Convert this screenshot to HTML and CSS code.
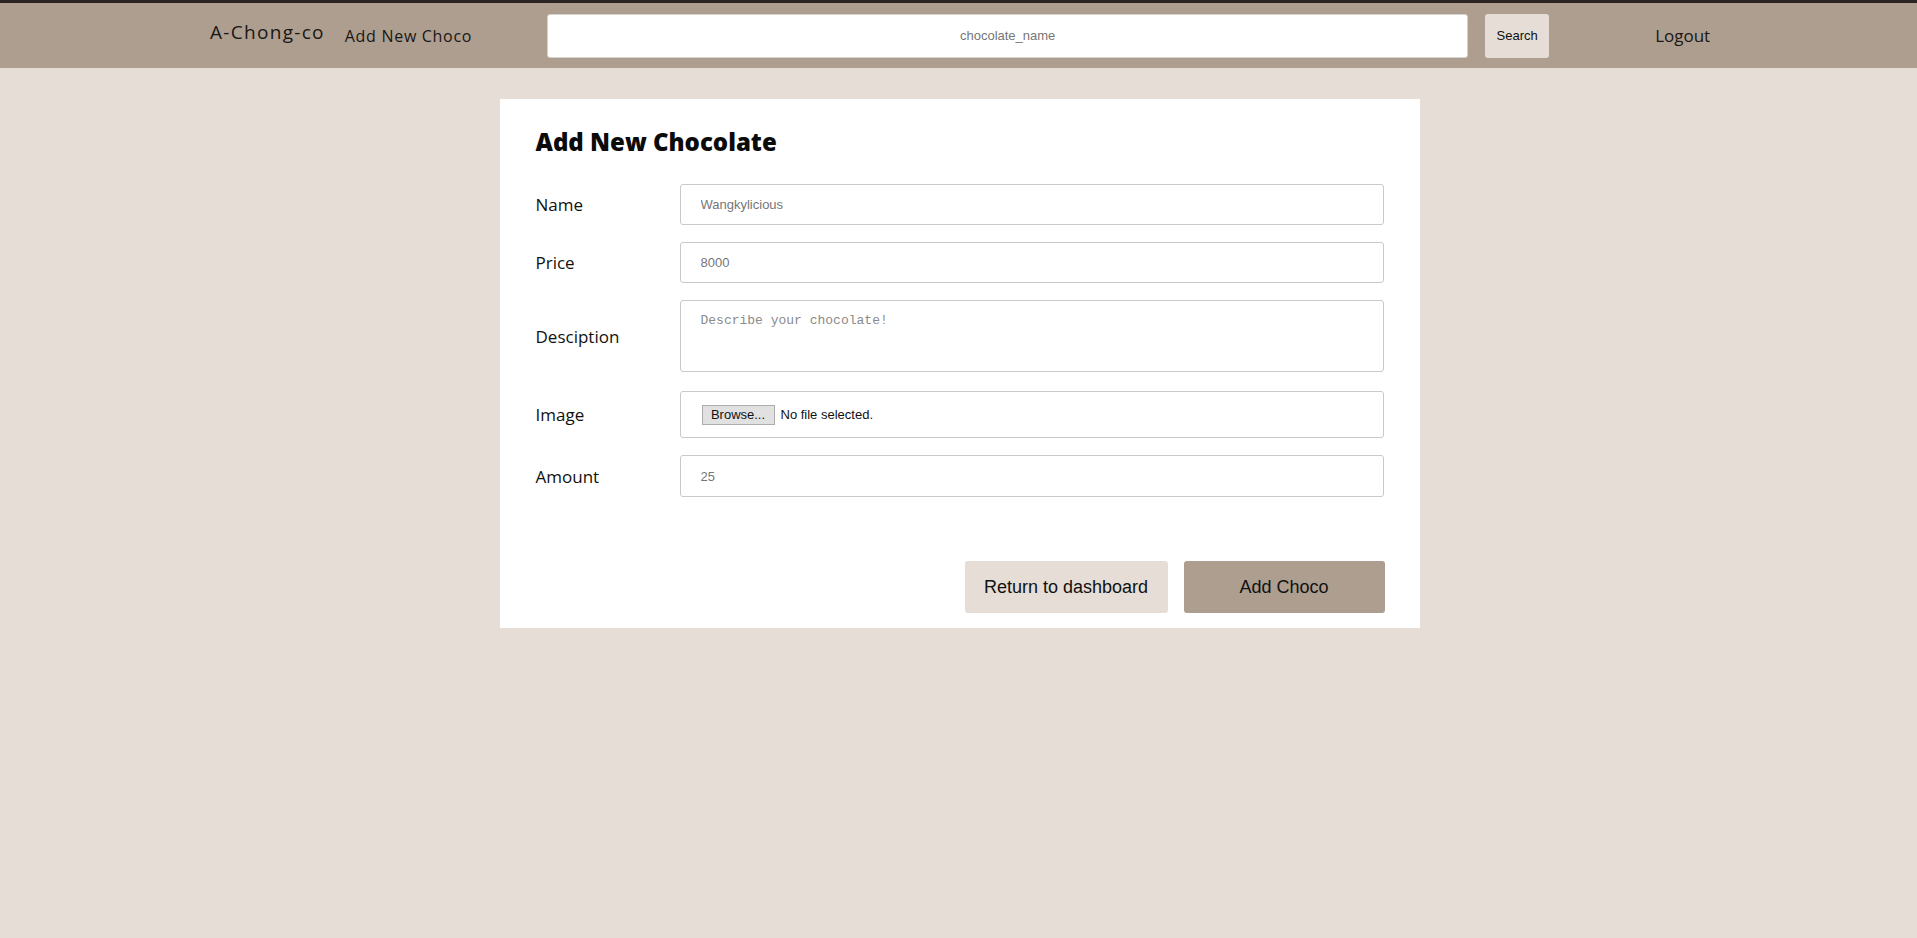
FILE: index.html
```html
<!DOCTYPE html>
<html lang="en">
<head>
<meta charset="utf-8">
<title>Add New Chocolate</title>
<link rel="stylesheet" href="styles.css">
</head>
<body>
<header class="topbar">
  <a class="brand" href="#">A-Chong-co</a>
  <a class="nav-link" href="#">Add New Choco</a>
  <form class="search">
    <input class="search-input" type="text" placeholder="chocolate_name">
    <button class="search-btn" type="button">Search</button>
  </form>
  <a class="logout" href="#">Logout</a>
</header>

<main class="card">
  <h1 class="card-title">Add New Chocolate</h1>
  <form class="choco-form">
    <div class="row">
      <label class="label">Name</label>
      <input class="field" type="text" placeholder="Wangkylicious">
    </div>
    <div class="row">
      <label class="label">Price</label>
      <input class="field" type="text" placeholder="8000">
    </div>
    <div class="row">
      <label class="label">Desciption</label>
      <textarea class="field area" placeholder="Describe your chocolate!"></textarea>
    </div>
    <div class="row row-file">
      <label class="label">Image</label>
      <div class="field file">
        <span class="browse">Browse...</span>
        <span class="file-text">No file selected.</span>
      </div>
    </div>
    <div class="row">
      <label class="label">Amount</label>
      <input class="field amount" type="text" placeholder="25">
    </div>
    <div class="actions">
      <button class="btn btn-light" type="button">Return to dashboard</button>
      <button class="btn btn-dark" type="button">Add Choco</button>
    </div>
  </form>
</main>
</body>
</html>
```
FILE: styles.css
```css
* { box-sizing: border-box; }

body {
  margin: 0;
  background: #e5ddd6;
  font-family: "Open Sans", "Liberation Sans", sans-serif;
  color: #111;
}

a { text-decoration: none; color: #1a1714; }

.topbar {
  display: flex;
  align-items: center;
  height: 68px;
  border-top: 3px solid #2a2522;
  background: #ad9e90;
  padding-left: 210px;
}

.brand {
  font-size: 19px;
  letter-spacing: 1.3px;
  margin-bottom: 8px;
}

.nav-link {
  margin-left: 20px;
  font-size: 16px;
  letter-spacing: 0.7px;
}

.search {
  display: flex;
  align-items: center;
  margin-left: 75px;
  gap: 17px;
}

.search-input {
  width: 921px;
  height: 44px;
  border: 1px solid #d8d2cc;
  border-radius: 3px;
  background: #fff;
  text-align: center;
  font-family: "Liberation Sans", sans-serif;
  font-size: 13px;
  color: #333;
}
.search-input::placeholder { color: #767676; }

.search-btn {
  width: 64px;
  height: 44px;
  border: none;
  border-radius: 3px;
  background: #e5ddd6;
  font-family: "Liberation Sans", sans-serif;
  font-size: 13px;
  color: #111;
}

.logout {
  margin-left: 106px;
  font-size: 17px;
}

.card {
  width: 920px;
  margin: 31px 0 0 calc(50% - 459px);
  background: #fff;
  padding: 27px 35px 15px 36px;
}

.card-title {
  margin: 0;
  font-size: 24px;
  line-height: 32px;
  font-weight: 800;
  letter-spacing: 0;
  color: #0b0b0b;
}

.choco-form {
  display: flex;
  flex-direction: column;
  gap: 17px;
  margin-top: 26px;
}

.row {
  display: flex;
  align-items: center;
}

.row-file { margin-top: 2px; }

.label {
  width: 144px;
  font-size: 17px;
  color: #111;
}

.field {
  width: 704px;
  height: 41px;
  border: 1px solid #c9c9c9;
  border-radius: 3px;
  background: #fff;
  padding: 0 20px;
  font-family: "Liberation Sans", sans-serif;
  font-size: 13px;
  color: #333;
}
.field::placeholder { color: #767676; }

.area {
  height: 72px;
  padding-top: 12px;
  resize: none;
  font-family: "Liberation Mono", monospace;
  font-size: 13px;
}
.area::placeholder { color: #8a8a8a; }

.amount { height: 42px; }

.file {
  height: 47px;
  display: flex;
  align-items: center;
  padding-left: 21px;
  gap: 6px;
  color: #111;
}

.browse {
  display: inline-block;
  width: 73px;
  height: 20px;
  line-height: 18px;
  text-align: center;
  background: #e1e1e1;
  border: 1px solid #adadad;
  font-size: 13px;
  color: #111;
}

.file-text { font-size: 13px; }

.actions {
  display: flex;
  justify-content: flex-end;
  gap: 16px;
  margin-top: 47px;
}

.btn {
  height: 52px;
  border: none;
  border-radius: 3px;
  font-family: "Liberation Sans", sans-serif;
  font-size: 18px;
  color: #111;
}

.btn-light { width: 203px; background: #e5ddd6; }
.btn-dark { width: 201px; background: #ad9e90; }
```
